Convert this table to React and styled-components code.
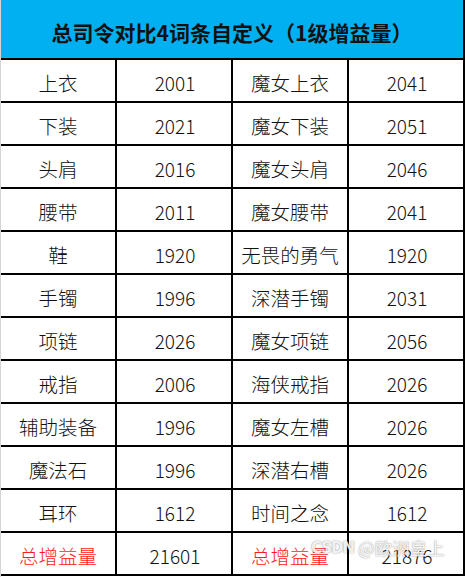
import React from "react";
import styled, { createGlobalStyle } from "styled-components";

const Global = createGlobalStyle`
  html, body { margin: 0; padding: 0; background: #ffffff; }
  body { font-family: "Noto Sans CJK SC", "Noto Sans", sans-serif; }
`;

const Sheet = styled.div`
  position: relative;
  width: 465px;
  height: 577px;
  box-sizing: border-box;
  border-left: 1px solid #d4d4d4;
  background: #fff;
`;

const Header = styled.div`
  height: 60px;
  box-sizing: border-box;
  background: #00b0f0;
  border-bottom: 2px solid #000;
  border-right: 2px solid #000;
  display: flex;
  align-items: center;
  justify-content: center;
  font-size: 21px;
  font-weight: 700;
  color: #111;
  padding-top: 5px;
`;

const Grid = styled.div`
  display: grid;
  grid-template-columns: repeat(4, 116px);
  grid-auto-rows: 43px;
`;

const Cell = styled.div`
  box-sizing: border-box;
  border-right: 2px solid #000;
  border-bottom: 2px solid #000;
  display: flex;
  align-items: center;
  justify-content: center;
  padding-top: 3px;
  padding-left: ${(p) => (p.$num ? "2px" : "0")};
  font-size: ${(p) => (p.$num ? "19px" : "19.5px")};
  font-weight: 300;
  color: ${(p) => (p.$red ? "#ff1a1a" : "#111")};
`;

const Watermark = styled.div`
  position: absolute;
  left: 310px;
  top: 535px;
  display: flex;
  align-items: center;
  gap: 4px;
  color: rgba(255, 255, 255, 0.9);
  font-size: 17.5px;
  text-shadow: 0 0 2px rgba(0, 0, 0, 0.3), 0 0 1px rgba(0, 0, 0, 0.25);
  white-space: nowrap;
  pointer-events: none;
`;

const Logo = styled.span`
  font-family: "DejaVu Sans", sans-serif;
  font-weight: 700;
  font-size: 15px;
  letter-spacing: -1px;
`;

const rows = [
  ["上衣", "2001", "魔女上衣", "2041"],
  ["下装", "2021", "魔女下装", "2051"],
  ["头肩", "2016", "魔女头肩", "2046"],
  ["腰带", "2011", "魔女腰带", "2041"],
  ["鞋", "1920", "无畏的勇气", "1920"],
  ["手镯", "1996", "深潜手镯", "2031"],
  ["项链", "2026", "魔女项链", "2056"],
  ["戒指", "2006", "海侠戒指", "2026"],
  ["辅助装备", "1996", "魔女左槽", "2026"],
  ["魔法石", "1996", "深潜右槽", "2026"],
  ["耳环", "1612", "时间之念", "1612"],
];

export default function App() {
  return (
    <>
      <Global />
      <Sheet>
        <Header>总司令对比4词条自定义（1级增益量）</Header>
        <Grid>
          {rows.map((r, i) =>
            r.map((c, j) => (
              <Cell key={`${i}-${j}`} $num={j % 2 === 1}>
                {c}
              </Cell>
            ))
          )}
          <Cell $red>总增益量</Cell>
          <Cell $num>21601</Cell>
          <Cell $red>总增益量</Cell>
          <Cell $num>21876</Cell>
        </Grid>
        <Watermark>
          <Logo>CSDN</Logo>
          <span>@欧洲皇上</span>
        </Watermark>
      </Sheet>
    </>
  );
}
